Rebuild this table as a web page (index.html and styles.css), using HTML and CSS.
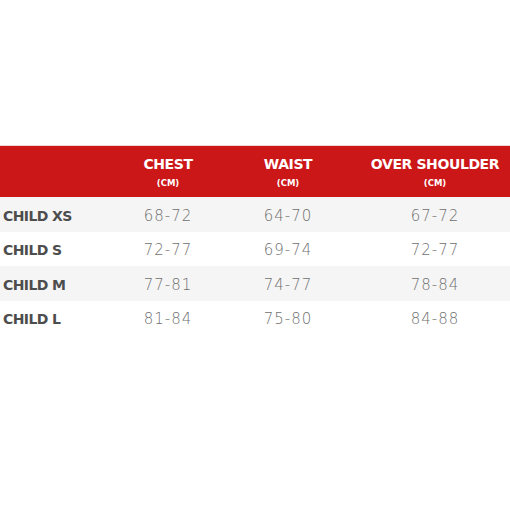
FILE: index.html
```html
<!DOCTYPE html>
<html>
<head>
<meta charset="utf-8">
<link rel="stylesheet" href="styles.css">
</head>
<body>
<div class="page">
  <div class="table">
    <div class="row head">
      <div class="cell label"></div>
      <div class="cell"><span class="h">CHEST</span><span class="u">(CM)</span></div>
      <div class="cell"><span class="h">WAIST</span><span class="u">(CM)</span></div>
      <div class="cell last"><span class="h">OVER SHOULDER</span><span class="u">(CM)</span></div>
    </div>
    <div class="row alt">
      <div class="cell label">CHILD XS</div>
      <div class="cell num">68-72</div>
      <div class="cell num">64-70</div>
      <div class="cell num last">67-72</div>
    </div>
    <div class="row">
      <div class="cell label">CHILD S</div>
      <div class="cell num">72-77</div>
      <div class="cell num">69-74</div>
      <div class="cell num last">72-77</div>
    </div>
    <div class="row alt">
      <div class="cell label">CHILD M</div>
      <div class="cell num">77-81</div>
      <div class="cell num">74-77</div>
      <div class="cell num last">78-84</div>
    </div>
    <div class="row">
      <div class="cell label">CHILD L</div>
      <div class="cell num">81-84</div>
      <div class="cell num">75-80</div>
      <div class="cell num last">84-88</div>
    </div>
  </div>
</div>
</body>
</html>
```
FILE: styles.css
```css
html, body {
  margin: 0;
  padding: 0;
  background: #ffffff;
}
.page {
  width: 510px;
  height: 510px;
  padding-top: 145px;
  box-sizing: border-box;
  font-family: "DejaVu Sans", "Liberation Sans", sans-serif;
}
.table {
  border-top: 1px solid #f2d4d4;
}
.row {
  display: grid;
  grid-template-columns: 110px 116px 124px 160px;
  height: 34px;
  align-items: center;
}
.row.alt {
  height: 35px;
}
.row.head {
  height: 51px;
  background: #cc1719;
  color: #ffffff;
}
.row.alt {
  background: #f5f5f5;
}
.row.head .cell {
  display: flex;
  flex-direction: column;
  align-items: center;
  padding-top: 2px;
}
.cell {
  text-align: center;
}
.cell.last {
  padding-left: 10px;
}
.h {
  font-weight: bold;
  font-size: 14px;
  letter-spacing: -0.4px;
  line-height: 16px;
}
.u {
  font-weight: bold;
  font-size: 8.5px;
  line-height: 12px;
  margin-top: 5px;
}
.label {
  text-align: left;
  padding-left: 3px;
  font-weight: bold;
  font-size: 14px;
  color: #4d4d4d;
  letter-spacing: -0.6px;
  padding-top: 2px;
}
.num {
  font-size: 15px;
  color: #6f6f6f;
  letter-spacing: 1px;
  font-weight: 300;
  padding-top: 2px;
}
```
